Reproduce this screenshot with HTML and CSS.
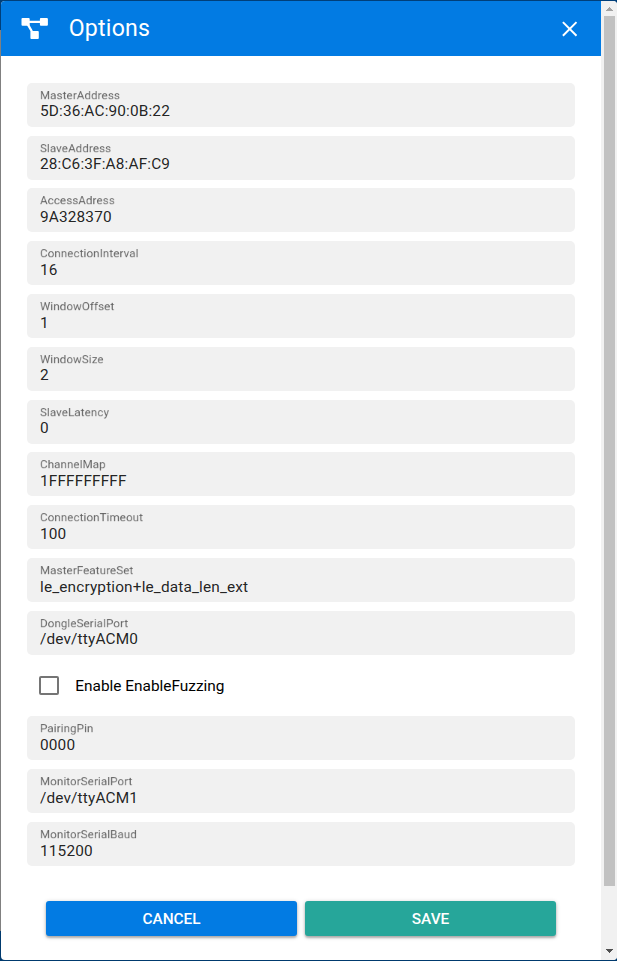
FILE: index.html
```
<!DOCTYPE html>
<html lang="en">
<head>
<meta charset="utf-8">
<title>Options</title>
<link rel="stylesheet" href="styles.css">
</head>
<body>
<div class="dialog">
  <main class="panel">
    <header class="bar">
      <svg class="logo" viewBox="0 0 28 23" fill="#fff"><rect x="0.5" y="1" width="8.2" height="7.8" rx="1"/><rect x="18.9" y="1" width="8" height="7.8" rx="1"/><rect x="9.4" y="14" width="8.4" height="8" rx="1"/><path d="M8 3.8h12v2.2H8zM5.8 8l2-1.2 4 6.9-2 1.1z"/></svg>
      <h1 class="title">Options</h1>
      <svg class="close" viewBox="0 0 16 16" fill="none" stroke="#fff" stroke-width="2"><path d="M.9 1.1l13.6 13.6M14.5 1.1L.9 14.7"/></svg>
    </header>
    <form class="fields">
      <div class="field"><span class="label">MasterAddress</span><span class="value">5D:36:AC:90:0B:22</span></div>
      <div class="field"><span class="label">SlaveAddress</span><span class="value">28:C6:3F:A8:AF:C9</span></div>
      <div class="field"><span class="label">AccessAdress</span><span class="value">9A328370</span></div>
      <div class="field"><span class="label">ConnectionInterval</span><span class="value">16</span></div>
      <div class="field"><span class="label">WindowOffset</span><span class="value">1</span></div>
      <div class="field"><span class="label">WindowSize</span><span class="value">2</span></div>
      <div class="field"><span class="label">SlaveLatency</span><span class="value">0</span></div>
      <div class="field"><span class="label">ChannelMap</span><span class="value">1FFFFFFFFF</span></div>
      <div class="field"><span class="label">ConnectionTimeout</span><span class="value">100</span></div>
      <div class="field"><span class="label">MasterFeatureSet</span><span class="value">le_encryption+le_data_len_ext</span></div>
      <div class="field"><span class="label">DongleSerialPort</span><span class="value">/dev/ttyACM0</span></div>
      <div class="check"><span class="box"></span><span>Enable EnableFuzzing</span></div>
      <div class="field"><span class="label">PairingPin</span><span class="value">0000</span></div>
      <div class="field"><span class="label">MonitorSerialPort</span><span class="value">/dev/ttyACM1</span></div>
      <div class="field"><span class="label">MonitorSerialBaud</span><span class="value">115200</span></div>
    </form>
    <footer class="actions">
      <div class="btn cancel">CANCEL</div>
      <div class="btn save">SAVE</div>
    </footer>
  </main>
  <aside class="scrollbar">
    <svg class="arrow" viewBox="0 0 7 4" fill="#a3a3a3" shape-rendering="crispEdges"><path d="M3 0h1v1h1v1h1v1h1v1H0V3h1V2h1V1h1z"/></svg>
    <div class="thumb"></div>
    <svg class="arrow down" viewBox="0 0 7 4" fill="#505050" shape-rendering="crispEdges"><path d="M0 0h7v1H6v1H5v1H4v1H3V3H2V2H1V1H0z"/></svg>
  </aside>
</div>
</body>
</html>
```
FILE: styles.css
```
* { box-sizing: border-box; }
html, body { height: 100%; margin: 0; overflow: hidden; }
body {
  padding: 1px 0 1px 1px;
  background: linear-gradient(#003f7a, #003f7a) 0 0 / 100% 30px no-repeat,
    linear-gradient(#003a6e, #003a6e) 0 100% / 100% 30px no-repeat, #808080;
  font-family: Roboto, "Liberation Sans", sans-serif;
  font-size: 15.4px;
}
.dialog {
  display: flex;
  height: 959px;
  background: #fff;
  border-radius: 4px;
  overflow: hidden;
}
.panel { width: 600px; }
.bar {
  display: flex;
  align-items: center;
  height: 55px;
  padding: 0 23.5px 0 20px;
  background: #027be3;
  color: #fff;
}
.logo { width: 28px; height: 23px; margin-right: 19.7px; }
.title {
  flex: 1;
  margin: 0;
  font-size: 23.1px;
  font-weight: 400;
  letter-spacing: 0.231px;
}
.close { width: 16px; height: 16px; }
.fields {
  display: flex;
  flex-direction: column;
  gap: 8.8px;
  padding: 26.8px 26px 0;
}
.field {
  display: flex;
  flex-direction: column;
  height: 44px;
  padding: 6px 13px 0;
  background: #f1f1f1;
  border-radius: 5px;
}
.label {
  margin-bottom: -3.4px;
  color: rgba(0, 0, 0, 0.6);
  line-height: 17px;
  letter-spacing: 0.144px;
  transform: translateY(0.5px) scale(0.75);
  transform-origin: left top;
  will-change: transform;
}
.value {
  color: rgba(0, 0, 0, 0.87);
  line-height: 18px;
  letter-spacing: 0.144px;
}
.check {
  display: flex;
  align-items: center;
  gap: 16.3px;
  height: 44px;
  padding-left: 12px;
  color: #000;
}
.box {
  width: 20px;
  height: 19px;
  border: 2px solid #757575;
  border-radius: 2px;
}
.actions {
  display: flex;
  gap: 8px;
  padding: 35px 45px 0;
}
.btn {
  flex: 1;
  height: 35px;
  line-height: 36px;
  border-radius: 3px;
  box-shadow: 0 1px 4px rgba(0, 0, 0, 0.25), 0 2px 2px rgba(0, 0, 0, 0.2);
  color: #fff;
  font-weight: 500;
  text-align: center;
}
.cancel { background: #027be3; }
.save { background: #26a69a; }
.scrollbar {
  display: flex;
  flex-direction: column;
  align-items: center;
  width: 16px;
  padding: 6px 2px 7px 3px;
  background: #f1f1f1;
}
.arrow { width: 7px; height: 4px; }
.thumb {
  width: 11px;
  height: 870px;
  margin-top: 5px;
  background: #c1c1c1;
}
.down { margin-top: auto; }
```
